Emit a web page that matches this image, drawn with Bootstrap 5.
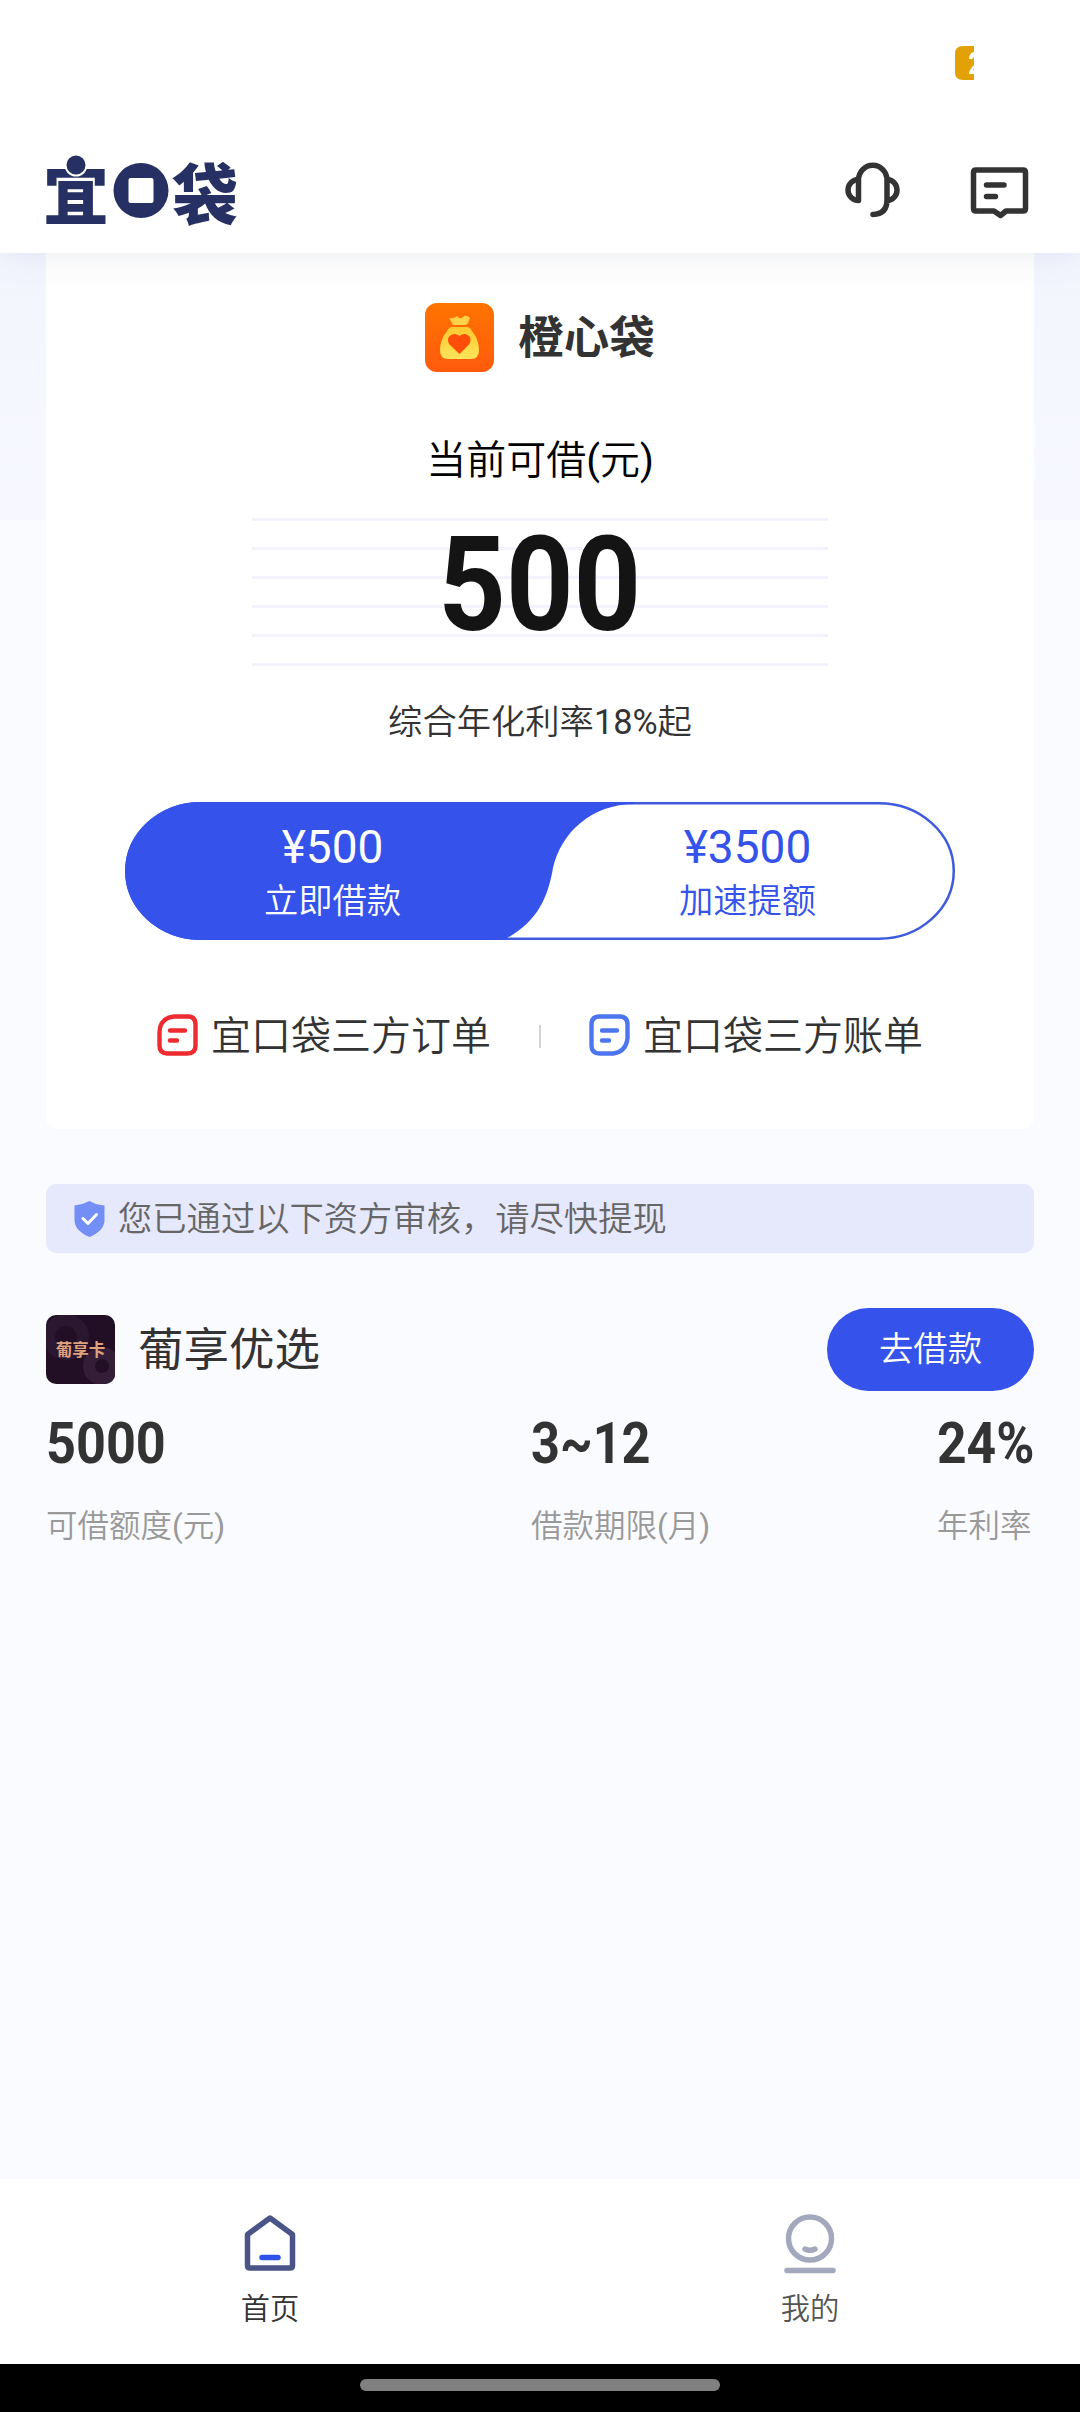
<!DOCTYPE html>
<html lang="zh-CN">
<head>
<meta charset="utf-8">
<meta name="viewport" content="width=device-width, initial-scale=1">
<title>宜口袋</title>
<link rel="stylesheet" href="https://cdn.jsdelivr.net/npm/bootstrap@5.3.0/dist/css/bootstrap.min.css">
<style>
  :root { --brand: #3552eb; --ink: #333; }
  html, body { height: 2412px; }
  body { font-family: Roboto, "Noto Sans CJK SC", sans-serif; font-weight: 350; color: var(--ink); background: #fafbff; overflow: hidden; }
  svg { display: block; flex: none; }
  .app { height: 2412px; }
  .statusbar { height: 115px; padding: 46px 106px 0 0; }
  .topbar { height: 253px; box-shadow: 0 0 36px rgba(60, 70, 120, .10); z-index: 2; position: relative; }
  .brandrow { height: 138px; padding: 22px 49px 0 34px; }
  .tools { padding-top: 23px; }
  .backdrop { background: linear-gradient(#f3f5fe, #f7f8ff) 0 0 / 100% 267px no-repeat; padding: 0 46px; }
  .loan { height: 876px; border-radius: 0 0 12px 12px; padding-top: 49px; }
  .appmark { width: 69px; height: 69px; margin-top: 1px; }
  .appname { font-size: 45.5px; line-height: 73px; font-weight: 700; }
  .caption { font-size: 40px; line-height: 50px; margin-top: 61px; color: #000; }
  .amount { width: 576px; height: 149px; margin-top: 32px; background: repeating-linear-gradient(#f2f3fd 0 3px, transparent 3px 29.1px); }
  .amount span { font-size: 131px; line-height: 132px; font-weight: 700; color: #141414; transform: scaleX(.9); margin-top: -16px; }
  .rate { font-size: 34.3px; line-height: 44px; margin-top: 33px; }
  .latin { font-weight: 400; }
  .choice { width: 830px; height: 138px; margin-top: 58px; position: relative; }
  .choice svg { position: absolute; inset: 0; }
  .choice .half { position: relative; height: 138px; padding-top: 19px; }
  .half b { font-size: 46px; line-height: 52px; font-weight: 400; display: block; }
  .half span { font-size: 34.3px; line-height: 44px; display: block; margin-top: 6px; }
  .left-half { width: 415px; }
  .right-half { width: 415px; color: var(--brand); }
  .orders { margin-top: 66px; height: 60px; font-size: 40px; line-height: 61px; }
  .orders svg { margin-top: -2px; }
  .tag-gap { margin-left: 13px; }
  .split { width: 2px; height: 23px; background: #d2d2d2; }
  .notice { height: 69px; margin-top: 55px; background: #e6e8fb; border-radius: 10px; padding-left: 28px; font-size: 34.3px; color: #666; }
  .notice span { padding-top: 2px; }
  .lender { margin-top: 55px; height: 83px; }
  .lender h2 { font-size: 45.5px; font-weight: 400; line-height: 69px; margin: 2px 0 0 23px; }
  .go { width: 207px; height: 83px; font-size: 34.3px; font-weight: 350; background: var(--brand); --bs-btn-color: #fff; padding: 0; }
  .figures { margin-top: 17px; }
  .figures strong { display: block; font-size: 58px; line-height: 70px; font-weight: 700; transform: scaleX(.9); transform-origin: 0 0; white-space: nowrap; }
  .figures .fig-b strong { transform: scaleX(.87); }
  .figures .fig-c strong { transform: scaleX(.89); }
  .figures .unit { display: block; font-size: 31.5px; line-height: 40px; margin-top: 29px; color: #999; white-space: nowrap; }
  .fig-a { width: 485px; } .fig-b { width: 406px; } .fig-c { width: 97px; }
  .tabs { height: 185px; padding-top: 31px; font-size: 29.3px; }
  .tabs span { line-height: 36px; margin-top: 15px; }
  .muted-tab { color: #555; }
  .homebar { height: 48px; padding-top: 15px; background: #000; }
  .homebar i { width: 360px; height: 12px; background: #808080; }
</style>
</head>
<body>
<div class="app d-flex flex-column">
  <header class="topbar bg-white flex-shrink-0">
    <div class="statusbar d-flex justify-content-end">
      <svg width="19" height="34" viewBox="0 0 19 34"><path d="M19 0H8Q0 0 0 8v18q0 8 8 8h11z" fill="#e2a206"/><path d="M19 6q-5 1-5 7h3l2-2zM19 19q-5 5-5 9h5v-4h-1l1-2z" fill="#fff"/></svg>
    </div>
    <div class="brandrow d-flex justify-content-between">
      <svg width="220" height="110" viewBox="34 137 220 110" fill="#273063" font-family="Noto Sans CJK SC, sans-serif" font-weight="900">
        <text x="43" y="219" font-size="66">宜</text>
        <circle cx="76" cy="165" r="10.500" stroke="#fff" stroke-width="2"/>
        <circle cx="141" cy="190.500" r="27.500"/>
        <rect x="128.500" y="178" width="25" height="25" rx="2" fill="#fff"/>
        <text x="172" y="219" font-size="66">袋</text>
      </svg>
      <div class="tools d-flex">
        <svg width="58" height="60" viewBox="843 160 58 60" fill="none" stroke="#333" stroke-width="5.500" stroke-linecap="round" stroke-linejoin="round"><path d="M858.500 200v-20a14 14.500 0 0 1 28.500 0v20q0 14-14 14.500M858.500 179.500a10.500 10.500 0 0 0 0 21M887 179.500a10 10.500 0 0 1 0 21"/></svg>
        <svg class="ms-5" width="82" height="60" viewBox="949 160 82 60" fill="none" stroke="#333" stroke-width="5.500" stroke-linecap="round" stroke-linejoin="round"><path d="M976 170h47q2.500 0 2.500 2.500v36q0 2.500-2.500 2.500h-17l-5.500 4.500L994 211h-18q-2.500 0-2.500-2.500v-36q0-2.500 2.500-2.500zM986.500 185H1004M986.500 196.500h9"/></svg>
      </div>
    </div>
  </header>

  <main class="backdrop flex-grow-1">
    <section class="loan bg-white d-flex flex-column align-items-center">
      <div class="d-flex align-items-start">
        <svg class="appmark" viewBox="0 0 69 69"><defs><linearGradient id="o" x1="0" y1="0" x2="0" y2="1"><stop stop-color="#ff7400"/><stop offset="1" stop-color="#ff5a0c"/></linearGradient><linearGradient id="y" x1="0" y1="0" x2="0" y2="1"><stop stop-color="#ffc92e"/><stop offset="1" stop-color="#ffe45a"/></linearGradient></defs><rect width="69" height="69" rx="12" fill="url(#o)"/><path d="M24 15q5 1 8-2 3 4 6 1 3-3 7 1l-2 5q-1 2-3 2H29q-2 0-2-2z" fill="#ffd24a"/><path d="M27 24h15q3 0 5 4 7 9 7 19 0 9-8 9H23q-8 0-8-9 0-10 7-19 2-4 5-4z" fill="url(#y)"/><path d="M34.500 51L25 42q-4-5-.5-9 5-4 10 0 5-4 9.500 0 3.500 4-.5 9z" fill="#ff4d0a"/></svg>
        <div class="appname ms-4">橙心袋</div>
      </div>
      <div class="caption">当前可借<span class="latin">(</span>元<span class="latin">)</span></div>
      <div class="amount d-flex justify-content-center align-items-center"><span>500</span></div>
      <div class="rate">综合年化利率<span class="latin">18%</span>起</div>
      <div class="choice d-flex text-center">
        <svg width="830" height="138" viewBox="0 0 830 138"><rect x="1.250" y="1.250" width="827.500" height="135.500" rx="75" ry="67.750" fill="#fff" stroke="#3f5bdc" stroke-width="2.500"/><path d="M75 0H510V2C466 2 436 31 428 66C423 95 413 119 382 136V138H75A75 69 0 0 1 75 0z" fill="#3552eb"/></svg>
        <div class="half left-half text-white"><b>¥500</b><span>立即借款</span></div>
        <div class="half right-half"><b>¥3500</b><span>加速提额</span></div>
      </div>
      <div class="orders d-flex align-items-center">
        <svg width="41" height="42" viewBox="0 0 41 42" fill="none" stroke="#ee2b30" stroke-width="4.400" stroke-linecap="round"><path d="M17 2.500h14q7.500 0 7.500 8v21q0 8-8 8H10.500q-8 0-8-8V18Q3 4 17 2.500z"/><path d="M13 16.500h15M13 26.500h7"/></svg>
        <span class="tag-gap">宜口袋三方订单</span>
        <i class="split mx-5"></i>
        <svg width="41" height="42" viewBox="0 0 41 42" fill="none" stroke="#4d75f0" stroke-width="4.400" stroke-linecap="round"><path d="M10.500 2.500h20q8 0 8 8V24Q37 38 24 39.500H10.500q-8 0-8-8v-21q0-8 8-8z"/><path d="M13 16.500h15M13 26.500h7"/></svg>
        <span class="tag-gap">宜口袋三方账单</span>
      </div>
    </section>

    <div class="notice d-flex align-items-center">
      <svg width="31" height="36" viewBox="0 0 31 36"><path d="M15.500 0q7 4 15 4.500v15Q30 30 15.500 36 1 30 .5 19.500v-15Q8 4 15.500 0z" fill="#738ff5"/><path d="M9 17.500l5 5 8.500-9" fill="none" stroke="#fff" stroke-width="3" stroke-linecap="round" stroke-linejoin="round"/></svg>
      <span class="tag-gap">您已通过以下资方审核，请尽快提现</span>
    </div>

    <div class="lender d-flex align-items-center">
      <svg width="69" height="69" viewBox="0 0 69 69"><defs><clipPath id="r"><rect width="69" height="69" rx="10"/></clipPath></defs><g clip-path="url(#r)"><rect width="69" height="69" fill="#220f26"/><circle cx="20" cy="22" r="17" fill="none" stroke="#2b1830" stroke-width="12"/><circle cx="56" cy="51" r="13" fill="none" stroke="#341e37" stroke-width="12"/></g><text x="34.500" y="41" font-size="16.500" font-weight="700" text-anchor="middle" fill="#e0a27c" font-family="Noto Sans CJK SC, sans-serif">葡享卡</text></svg>
      <h2>葡享优选</h2>
      <button class="go btn rounded-pill ms-auto">去借款</button>
    </div>
    <div class="figures d-flex">
      <div class="fig-a"><strong>5000</strong><div class="unit">可借额度<span class="latin">(</span>元<span class="latin">)</span></div></div>
      <div class="fig-b"><strong>3~12</strong><div class="unit">借款期限<span class="latin">(</span>月<span class="latin">)</span></div></div>
      <div class="fig-c"><strong>24%</strong><div class="unit">年利率</div></div>
    </div>
  </main>

  <nav class="tabs bg-white d-flex flex-shrink-0">
    <div class="w-50 d-flex flex-column align-items-center">
      <svg width="60" height="66" viewBox="240 2210 60 66" fill="none" stroke-width="5.500" stroke-linecap="round" stroke-linejoin="round"><path d="M247.500 2234.500l22.500-16.500 22.500 16.500v31q0 2.500-2.500 2.500h-40q-2.500 0-2.500-2.500z" stroke="#4a5487"/><path d="M262 2257.500h16" stroke="#2f52ea"/></svg>
      <span>首页</span>
    </div>
    <div class="w-50 d-flex flex-column align-items-center">
      <svg width="60" height="66" viewBox="780 2210 60 66" fill="none" stroke="#a3a8bd" stroke-width="5.500" stroke-linecap="round"><circle cx="810" cy="2238.500" r="21.500"/><path d="M805 2249q5 2.500 10 0M787 2270.500h46"/></svg>
      <span class="muted-tab">我的</span>
    </div>
  </nav>
  <div class="homebar d-flex justify-content-center flex-shrink-0"><i class="rounded-pill"></i></div>
</div>
<script src="https://cdn.jsdelivr.net/npm/bootstrap@5.3.0/dist/js/bootstrap.bundle.min.js"></script>
</body>
</html>
